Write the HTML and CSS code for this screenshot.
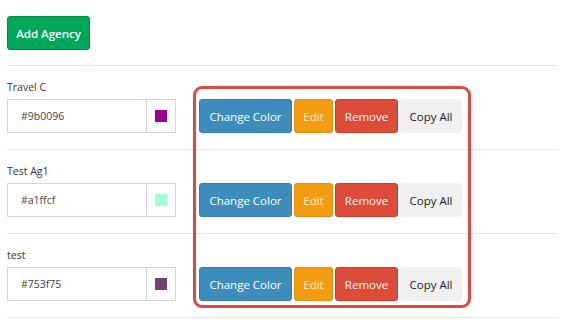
FILE: index.html
```html
<!DOCTYPE html>
<html lang="en">
<head>
  <meta charset="UTF-8" />
  <title>Agencies</title>
  <link rel="stylesheet" href="styles.css">
</head>
<body>
  <div class="page">
    <div class="toolbar">
      <button class="btn btn-success">Add Agency</button>
    </div>

    <div class="agency-row">
      <div class="field">
        <label>Travel C</label>
        <div class="color-group">
          <input type="text" value="#9b0096">
          <span class="addon"><i class="swatch" style="background:#9b0096"></i></span>
        </div>
      </div>
      <div class="actions">
        <button class="btn btn-primary">Change Color</button>
        <button class="btn btn-warning">Edit</button>
        <button class="btn btn-danger">Remove</button>
        <button class="btn btn-default">Copy All</button>
      </div>
    </div>

    <div class="agency-row">
      <div class="field">
        <label>Test Ag1</label>
        <div class="color-group">
          <input type="text" value="#a1ffcf">
          <span class="addon"><i class="swatch" style="background:#a1ffcf"></i></span>
        </div>
      </div>
      <div class="actions">
        <button class="btn btn-primary">Change Color</button>
        <button class="btn btn-warning">Edit</button>
        <button class="btn btn-danger">Remove</button>
        <button class="btn btn-default">Copy All</button>
      </div>
    </div>

    <div class="agency-row">
      <div class="field">
        <label>test</label>
        <div class="color-group">
          <input type="text" value="#753f75">
          <span class="addon"><i class="swatch" style="background:#753f75"></i></span>
        </div>
      </div>
      <div class="actions">
        <button class="btn btn-primary">Change Color</button>
        <button class="btn btn-warning">Edit</button>
        <button class="btn btn-danger">Remove</button>
        <button class="btn btn-default">Copy All</button>
      </div>
    </div>

    <!-- highlight box drawn over the action buttons -->
    <div class="highlight"></div>
  </div>
</body>
</html>
```

FILE: styles.css
```css
body {
  margin: 0;
  background: #fff;
  font-family: "Open Sans", Arial, sans-serif;
  color: #333;
}

.page {
  position: relative;
  padding: 0 7px;
}

.toolbar {
  padding: 16px 0 15px;
  border-bottom: 1px solid #e8e8e8;
}

.btn {
  font-family: inherit;
  font-size: 11.5px;
  height: 34px;
  padding: 0;
  border: 1px solid transparent;
  border-radius: 3px;
  cursor: pointer;
  color: #fff;
}

.btn-success {
  background-color: #00a65a;
  border-color: #008d4c;
  width: 83px;
  font-weight: 600;
}

.btn-primary {
  background-color: #3c8dbc;
  border-color: #367fa9;
  width: 93px;
}

.btn-warning {
  background-color: #f39c12;
  border-color: #e08e0b;
  width: 39px;
  color: #fdf3c8;
}

.btn-danger {
  background-color: #dd4b39;
  border-color: #d73925;
  width: 63px;
}

.btn-default {
  background-color: #f0f0f0;
  border-color: #f0f0f0;
  color: #222;
  width: 62px;
}

.agency-row {
  display: flex;
  align-items: flex-end;
  gap: 23px;
  padding: 13px 0 16px;
  border-bottom: 1px solid #e8e8e8;
}

.field label {
  display: block;
  font-size: 10.5px;
  line-height: 16px;
  margin-bottom: 4px;
  color: #333;
}

.color-group {
  display: flex;
  width: 169px;
  height: 34px;
}

.color-group input {
  box-sizing: border-box;
  width: 139px;
  height: 34px;
  border: 1px solid #d2d6de;
  border-right: none;
  padding: 0 13px;
  font-family: inherit;
  font-size: 10.5px;
  color: #444;
}

.addon {
  box-sizing: border-box;
  flex: 1;
  border: 1px solid #d2d6de;
  display: flex;
  align-items: center;
  justify-content: center;
}

.swatch {
  width: 12px;
  height: 12px;
}

.actions {
  display: flex;
  gap: 2px;
}

.highlight {
  position: absolute;
  left: 193px;
  top: 86px;
  width: 272px;
  height: 216px;
  border: 3px solid #dc4a42;
  border-radius: 9px;
}
```
